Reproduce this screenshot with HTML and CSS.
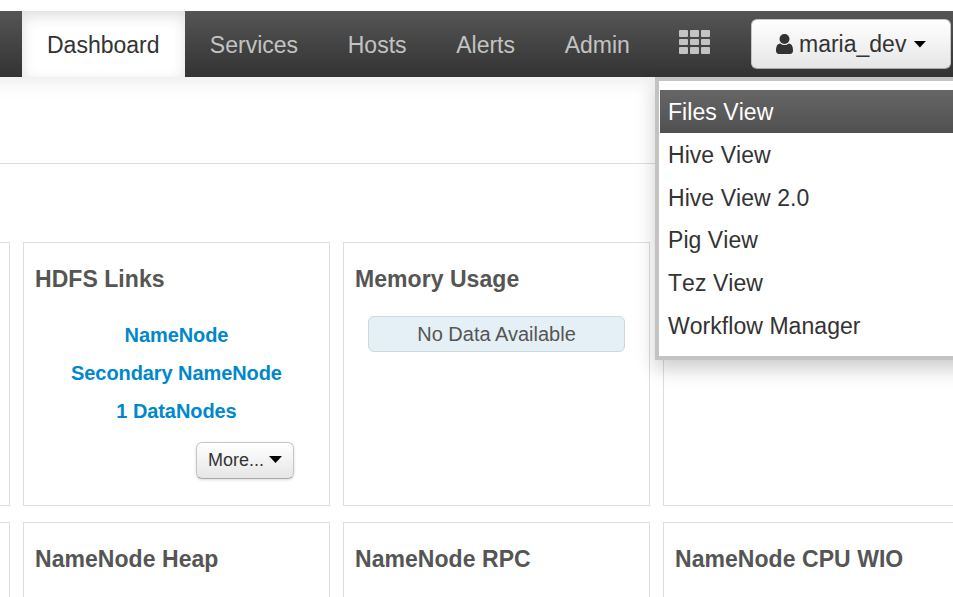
FILE: index.html
```html
<!DOCTYPE html>
<html lang="en">
<head>
<meta charset="utf-8">
<title>Dashboard</title>
<link rel="stylesheet" href="styles.css">
</head>
<body>
<header class="navbar">
  <nav class="tabs">
    <a class="tab active"><span>Dashboard</span></a>
    <a class="tab">Services</a>
    <a class="tab">Hosts</a>
    <a class="tab">Alerts</a>
    <a class="tab">Admin</a>
  </nav>
  <div class="views">
    <svg class="grid-icon" width="31" height="24" viewBox="0 0 31 24">
      <g fill="#c3c3c3">
        <rect x="0" y="0" width="9" height="7" rx="1"/><rect x="11" y="0" width="9" height="7" rx="1"/><rect x="22" y="0" width="9" height="7" rx="1"/>
        <rect x="0" y="9" width="9" height="6" rx="1"/><rect x="11" y="9" width="9" height="6" rx="1"/><rect x="22" y="9" width="9" height="6" rx="1"/>
        <rect x="0" y="17" width="9" height="7" rx="1"/><rect x="11" y="17" width="9" height="7" rx="1"/><rect x="22" y="17" width="9" height="7" rx="1"/>
      </g>
    </svg>
    <ul class="menu">
      <li class="selected">Files View</li>
      <li>Hive View</li>
      <li>Hive View 2.0</li>
      <li>Pig View</li>
      <li>Tez View</li>
      <li>Workflow Manager</li>
    </ul>
  </div>
  <button class="btn user">
    <svg width="17" height="20" viewBox="0 0 17 20"><path fill="#333" d="M4.200 9.500C1.200 9.800 0 12.500 0 16.600Q0 20 3 20H14Q17 20 17 16.600C17 12.500 15.800 9.800 12.800 9.500Q10.900 11 8.500 11T4.200 9.500Z"/><circle cx="8.500" cy="5" r="5" fill="#333"/></svg>
    <span>maria_dev</span><i class="caret"></i>
  </button>
</header>
<div class="subbar"></div>
<main class="widgets">
  <section class="widget"></section>
  <section class="widget">
    <h2>HDFS Links</h2>
    <div class="links"><a>NameNode</a><a>Secondary NameNode</a><a>1 DataNodes</a></div>
    <button class="btn more"><span>More...</span><i class="caret"></i></button>
  </section>
  <section class="widget">
    <h2>Memory Usage</h2>
    <div class="info">No Data Available</div>
  </section>
  <section class="widget"></section>
  <section class="widget"></section>
  <section class="widget"><h2>NameNode Heap</h2></section>
  <section class="widget"><h2>NameNode RPC</h2></section>
  <section class="widget"><h2>NameNode CPU WIO</h2></section>
</main>
</body>
</html>
```
FILE: styles.css
```css
* { box-sizing: border-box; }
html, body { margin: 0; overflow: hidden; }
body {
  height: 597px;
  padding-top: 11px;
  background: #fff;
  color: #333;
  font-family: "Liberation Sans", Arial, sans-serif;
  font-size: 23px;
}
.navbar {
  position: relative;
  z-index: 2;
  display: flex;
  height: 66px;
  margin: 0 -40px;
  padding-left: 62px;
  background: linear-gradient(#555, #333);
  box-shadow: 0 2px 20px rgba(0, 0, 0, .1);
  clip-path: inset(0 0 -400px 0);
}
.tabs { display: flex; width: 633px; }
.tab {
  padding: 0 24.85px;
  line-height: 68px;
  color: #c3c3c3;
}
.tab.active {
  flex-shrink: 0;
  width: 163px;
  padding-left: 25px;
  background: #fff;
  color: #333;
  box-shadow: inset 0 5px 14px rgba(0, 0, 0, .13);
}
.views { position: relative; padding: 19px 0 0 24px; }
.grid-icon { display: block; }
.menu {
  position: absolute;
  top: 66px;
  left: 0;
  width: 400px;
  height: 283px;
  margin: 0;
  padding: 9px 0 0 1px;
  list-style: none;
  background: #fff;
  border: 4px solid #c3c3c3;
  box-shadow: 0 9px 18px rgba(0, 0, 0, .2);
}
.menu li {
  height: 42.8px;
  padding-left: 8px;
  line-height: 44px;
  letter-spacing: .05px;
  font-kerning: none;
}
.menu .selected {
  background: linear-gradient(#666, #505050);
  color: #fff;
}
.btn {
  display: flex;
  align-items: center;
  border: 1px solid #c5c5c5;
  border-bottom-color: #aaa;
  border-radius: 6px;
  background: linear-gradient(#fff, #e6e6e6);
  color: #333;
  font: inherit;
  padding: 0;
}
.caret {
  width: 13px;
  height: 7px;
  background: #000;
  clip-path: polygon(0 0, 100% 0, 50% 100%);
}
.user {
  width: 200px;
  height: 50px;
  margin: 8px 0 0 41px;
  padding-left: 24px;
}
.user span { margin: 0 7px 0 6px; }
.subbar { height: 87px; border-bottom: 1px solid #ddd; }
.widgets {
  display: grid;
  grid-template-columns: repeat(4, 307px);
  grid-auto-rows: 264px;
  gap: 16px 13px;
  margin: 78px 0 0 -297px;
}
.widget { border: 1px solid #ddd; padding: 0 11px; }
.widget h2 {
  margin: 22px 0 0;
  color: #555;
  font-size: 23px;
  line-height: 28px;
  letter-spacing: .05px;
}
.links {
  display: flex;
  flex-direction: column;
  align-items: center;
  margin-top: 23px;
}
.links a {
  color: #08c;
  font-size: 20px;
  font-weight: bold;
  line-height: 38px;
  letter-spacing: -.08px;
}
.more {
  width: 98px;
  height: 37px;
  margin: 12px 0 0 161px;
  padding-left: 11px;
  font-size: 18px;
  box-shadow: 0 1px 3px rgba(0, 0, 0, .15);
}
.more .caret { margin: 0 0 2px 5px; }
.info {
  height: 36px;
  width: 257px;
  margin: 23px 0 0 13px;
  border: 1px solid #ced8dd;
  border-radius: 6px;
  background: #e4f0f5;
  color: #555;
  font-size: 20px;
  line-height: 35px;
  text-align: center;
}
```
